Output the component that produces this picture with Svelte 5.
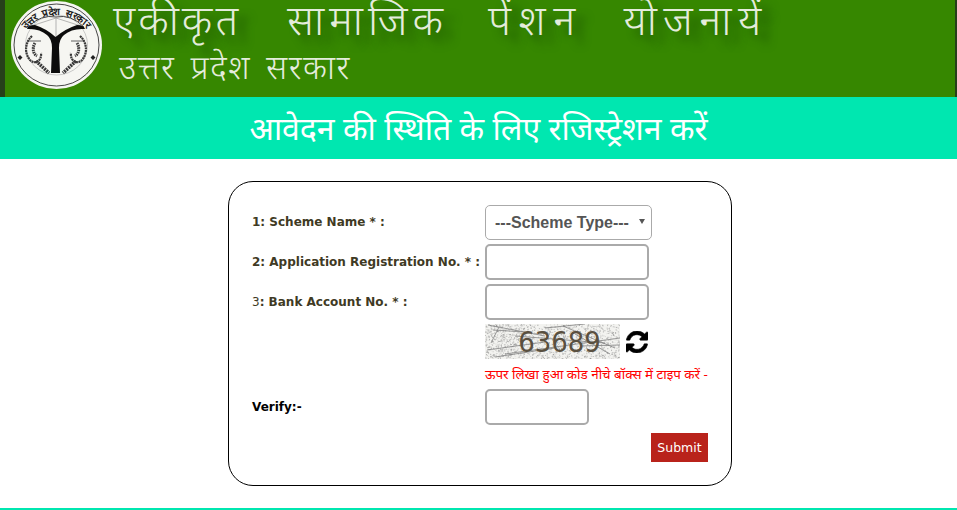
<script>
  const noise = [];
  let seed = 7;
  function rnd(n) {
    seed = (seed * 9301 + 49297) % 233280;
    return (seed / 233280) * n;
  }
  for (let i = 0; i < 1600; i++) {
    noise.push({ x: rnd(135), y: rnd(35), o: 0.1 + rnd(0.5) });
  }
  const scratches = [
    'M3 1L60 12', 'M8 6L40 8', 'M14 3L6 19', 'M2 26L60 18', 'M20 30L135 14',
    'M60 4L100 0', 'M78 2L130 24', 'M30 12L120 19', 'M10 33L70 24', 'M90 10L125 30', 'M95 22L135 21'
  ];
</script>

<div class="page">
  <header class="masthead">
    <svg class="seal" viewBox="0 0 92 90" aria-hidden="true">
      <ellipse cx="45.500" cy="44" rx="45.500" ry="44" fill="#f6f6f2" />
      <ellipse cx="45.500" cy="44" rx="42.500" ry="41" fill="none" stroke="#333" stroke-width="0.9" />
      <ellipse cx="45.500" cy="44" rx="31" ry="30" fill="none" stroke="#aaa" stroke-width="0.6" />
      <path id="sealArc" d="M8 50A37.500 36 0 0 1 83 50" fill="none" />
      <text class="seal-text" text-anchor="middle"><textPath href="#sealArc" startOffset="50%">उत्तर प्रदेश सरकार</textPath></text>
      <path d="M17 26Q30 13 45 16Q60 13 73 26" fill="none" stroke="#444" stroke-width="1" />
      <path d="M17 26L45 17L73 26M45 16V40" fill="none" stroke="#888" stroke-width="0.6" />
      <path d="M16 28Q28 27 36 34Q41 38 41 47L40 72H49L48 47Q48 38 53 34Q61 27 74 28Q73 24 66 24Q54 28 44.500 36Q36 28 24 24Q17 24 16 28Z" fill="#0c0c0c" />
      <g fill="none" stroke="#3a3a3a">
        <path d="M21 35C14 41 13 52 19 59C24 64 31 60 30 52" stroke-width="2.200" stroke-dasharray="2 0.600" />
        <path d="M69 35C76 41 77 52 71 59C66 64 59 60 60 52" stroke-width="2.200" stroke-dasharray="2 0.600" />
        <path d="M24 42C21 47 22 53 26 55M66 42C69 47 68 53 64 55" stroke-width="3" stroke-dasharray="1.500 0.800" />
        <path d="M25 60L38 72M65 60L52 72" stroke-width="3.500" stroke-dasharray="2 0.800" />
        <path d="M16 40L30 40M60 40L74 40" stroke-width="0.8" />
      </g>
      <path d="M9 54l2.500 2.500-2.500 2.500-2.500-2.500zM82 54l2.500 2.500-2.500 2.500-2.500-2.500z" fill="#222" />
    </svg>
    <div class="masthead-text">
      <h1><span class="w1">एकीकृत</span> <span class="w2">सामाजिक</span> <span class="w3">पेंशन</span> <span class="w4">योजनायें</span></h1>
      <p>उत्तर प्रदेश सरकार</p>
    </div>
  </header>

  <div class="banner">आवेदन की स्थिति के लिए रजिस्ट्रेशन करें</div>

  <form class="card" onsubmit={(e) => e.preventDefault()}>
    <div class="row first">
      <label for="scheme">1: Scheme Name * :</label>
      <div class="select-wrap">
        <select id="scheme"><option>---Scheme Type---</option></select>
      </div>
    </div>
    <div class="row">
      <label for="reg">2: Application Registration No. * :</label>
      <input id="reg" type="text" />
    </div>
    <div class="row">
      <label for="bank"><span class="plain">3</span>: Bank Account No. * :</label>
      <input id="bank" type="text" />
    </div>
    <div class="captcha-row">
      <div class="captcha-wrap">
        <div class="captcha">
          <svg class="captcha-noise" viewBox="0 0 135 35" aria-hidden="true">
            {#each noise as n}
              <rect x={n.x} y={n.y} width="1" height="1" fill="#777" opacity={n.o} />
            {/each}
            {#each scratches as d}
              <path {d} stroke="#808080" stroke-width="0.8" fill="none" />
            {/each}
          </svg>
          <span>63689</span>
        </div>
        <svg class="refresh" viewBox="128 128 1536 1536" aria-hidden="true">
          <path d="M1639 1056q0 5-1 7-64 268-268 434.500t-478 166.500q-146 0-282.500-55t-243.500-157l-129 129q-19 19-45 19t-45-19-19-45v-448q0-26 19-45t45-19h448q26 0 45 19t19 45-19 45l-137 137q71 66 161 102t187 36q134 0 250-65t186-179q11-17 53-117 8-23 30-23h192q13 0 22.500 9.500t9.500 22.500zm25-800v448q0 26-19 45t-45 19h-448q-26 0-45-19t-19-45 19-45l138-138q-148-137-349-137-134 0-250 65t-186 179q-11 17-53 117-8 23-30 23h-199q-13 0-22.500-9.500t-9.500-22.500v-7q65-268 270-434.500t480-166.500q146 0 284 55.500t245 156.500l130-129q19-19 45-19t45 19 19 45z" fill="#000" stroke="#000" stroke-width="40" />
        </svg>
      </div>
      <p class="hint">ऊपर लिखा हुआ कोड नीचे बॉक्स में टाइप करें -</p>
    </div>
    <div class="row verify-row">
      <label class="verify" for="verify">Verify:-</label>
      <input id="verify" class="short" type="text" />
    </div>
    <div class="actions">
      <button type="submit">Submit</button>
    </div>
  </form>

  <div class="footer-line"></div>
</div>

<style>
  :global(body) {
    margin: 0;
    background: #fff;
    font-family: "DejaVu Sans", Verdana, sans-serif;
  }

  .page {
    height: 510px;
    display: flex;
    flex-direction: column;
    overflow: hidden;
  }

  .masthead {
    height: 97px;
    box-sizing: border-box;
    background: #368700;
    border-left: 5px solid #26401a;
    border-right: 2px solid #26401a;
    padding: 1px 0 0 6px;
    display: flex;
    gap: 10px;
  }

  .seal {
    width: 92px;
    height: 90px;
    flex: none;
  }

  .seal-text {
    font-size: 10px;
    font-weight: bold;
    fill: #222;
    word-spacing: 1px;
  }

  .masthead-text {
    color: #e4ecdc;
    font-family: "Noto Sans", "DejaVu Sans", sans-serif;
    display: flex;
    flex-direction: column;
  }

  h1 {
    margin: 1px 0 0;
    font-size: 42px;
    font-weight: 300;
    line-height: 34px;
    white-space: nowrap;
    text-shadow: 10px 9px 9px #1f5c00;
  }

  h1 .w1 {
    letter-spacing: 3px;
  }

  h1 .w2 {
    margin-left: 35px;
    letter-spacing: 5px;
  }

  h1 .w3 {
    margin-left: 29px;
    letter-spacing: 7.500px;
  }

  h1 .w4 {
    margin-left: 30px;
    letter-spacing: 6.500px;
  }

  .masthead-text p {
    margin: 11px 0 0 6px;
    font-size: 33px;
    font-weight: 300;
    line-height: 40px;
    letter-spacing: 1.500px;
    word-spacing: 5px;
    white-space: nowrap;
  }

  .banner {
    height: 62px;
    flex: none;
    background: #00e7b0;
    color: #fff;
    font-family: "Noto Sans", "DejaVu Sans", sans-serif;
    font-size: 32px;
    line-height: 62px;
    text-align: center;
  }

  .card {
    width: 504px;
    height: 305px;
    box-sizing: border-box;
    margin: 22px 0 0 228px;
    padding: 23px 23px 0;
    border: 1px solid #000;
    border-radius: 25px;
    flex: none;
  }

  .row {
    display: grid;
    grid-template-columns: 233px auto;
    justify-content: start;
    align-items: start;
    margin-bottom: 4px;
  }

  label {
    font-size: 12px;
    font-weight: 700;
    color: #3f3a24;
    padding-top: 11px;
    white-space: nowrap;
  }

  .first label {
    padding-top: 10px;
  }

  .plain {
    font-weight: 400;
  }

  .select-wrap {
    position: relative;
    height: 35px;
  }

  /* the little native-looking arrow */
  .select-wrap::after {
    content: "";
    position: absolute;
    top: 14px;
    right: 7px;
    border-left: 3px solid transparent;
    border-right: 3px solid transparent;
    border-top: 5px solid #555;
    pointer-events: none;
  }

  select {
    appearance: none;
    display: block;
    width: 167px;
    height: 35px;
    box-sizing: border-box;
    border: 1px solid #aaa;
    border-radius: 5px;
    background: #fff;
    color: #555;
    font-family: "Liberation Sans", Arial, sans-serif;
    font-size: 16px;
    font-weight: 700;
    padding: 0 9px;
  }

  input {
    display: block;
    width: 164px;
    height: 36px;
    box-sizing: border-box;
    border: 2px solid #aaa;
    border-radius: 5px;
    background: #fff;
  }

  input.short {
    width: 104px;
  }

  .captcha-row {
    margin: 1px 0 0 233px;
  }

  .captcha-wrap {
    display: flex;
    align-items: center;
    gap: 6px;
  }

  .captcha {
    width: 135px;
    height: 35px;
    position: relative;
    background: #f3f3f0;
    overflow: hidden;
    display: flex;
    align-items: center;
    justify-content: center;
  }

  .captcha-noise {
    position: absolute;
    inset: 0;
    width: 100%;
    height: 100%;
  }

  .captcha span {
    position: relative;
    margin-left: 14px;
    font-family: "DejaVu Sans", sans-serif;
    font-size: 26px;
    color: #5a5040;
    transform: scaleY(1.12);
  }

  .refresh {
    width: 22px;
    height: 22px;
    flex: none;
  }

  .hint {
    margin: 6px 0 0;
    color: #f00;
    font-family: "Noto Sans", "DejaVu Sans", sans-serif;
    font-size: 13.4px;
    line-height: 18px;
    white-space: nowrap;
  }

  .verify-row {
    margin: 6px 0 0;
  }

  .verify {
    color: #000;
  }

  .actions {
    display: flex;
    justify-content: flex-end;
    margin-top: 8px;
  }

  button {
    width: 57px;
    height: 29px;
    border: none;
    background: #b9231b;
    color: #fff;
    font-family: "DejaVu Sans", Verdana, sans-serif;
    font-size: 12.500px;
    padding: 0;
  }

  .footer-line {
    height: 2px;
    flex: none;
    margin-top: 22px;
    background: #00e7b0;
  }
</style>
